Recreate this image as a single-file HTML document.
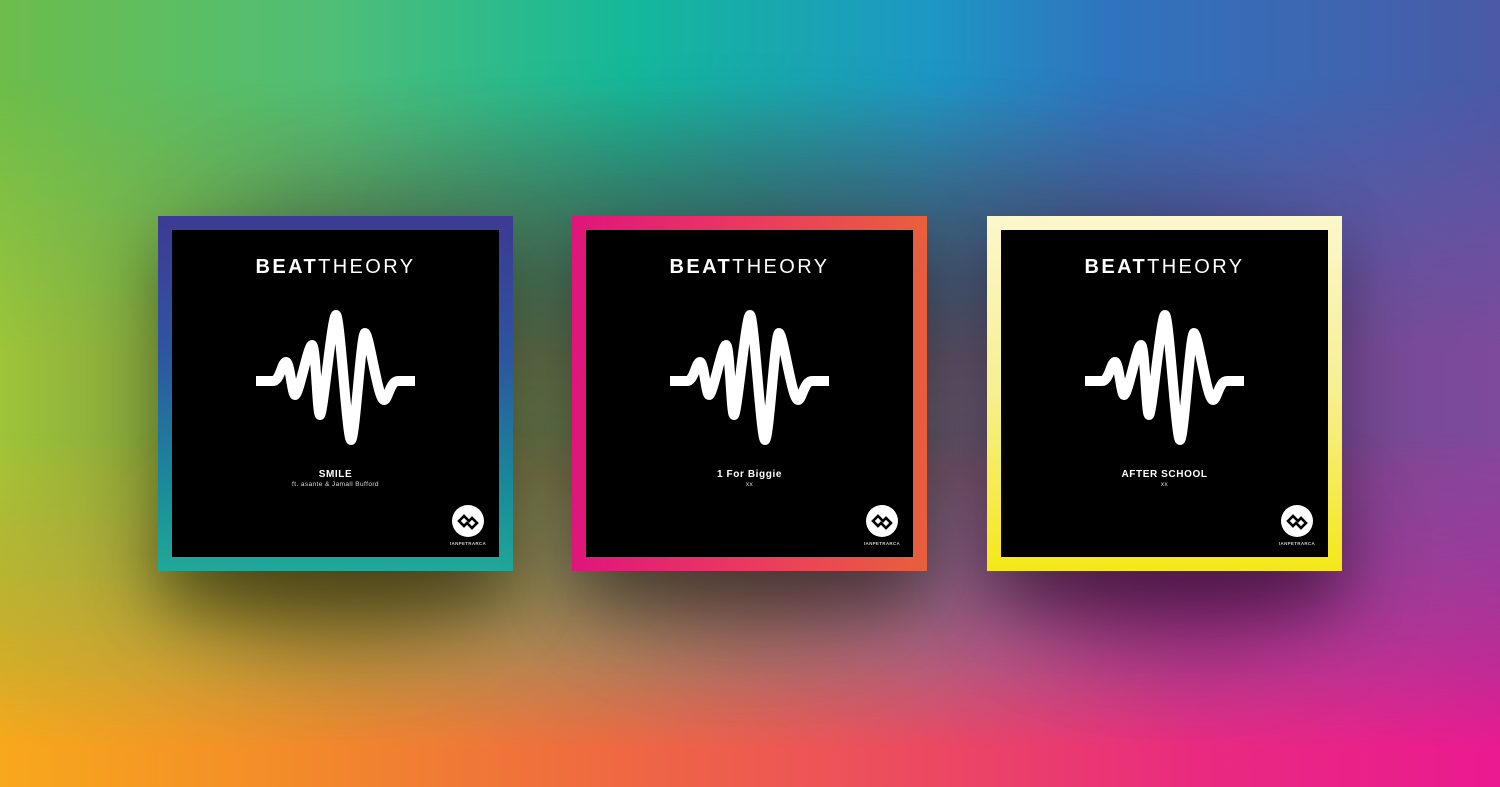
<!DOCTYPE html>
<html><head><meta charset="utf-8"><style>
*{margin:0;padding:0;box-sizing:border-box}
body{width:1500px;height:787px;overflow:hidden;position:relative;font-family:"Liberation Sans",sans-serif;background:#888}
.l{position:absolute;inset:0}
.top{background:linear-gradient(90deg,#6cbd4b 0%,#4fbe77 22%,#14b89a 42%,#1d97c4 62%,#2f74be 74%,#4a5aa6 100%)}
.mid{background:linear-gradient(90deg,#9ec43a 0%,#6f8a40 20%,#5a5e50 50%,#6c4a8a 80%,#7e4a9c 100%);-webkit-mask-image:linear-gradient(180deg,transparent 10%,#000 45%,#000 60%,transparent 85%);mask-image:linear-gradient(180deg,transparent 10%,#000 45%,#000 60%,transparent 85%)}
.bot{background:linear-gradient(90deg,#f8a81c 0%,#f28a2a 20%,#ef6a40 40%,#ec4c5e 60%,#e92a80 80%,#ea1a90 100%);-webkit-mask-image:linear-gradient(180deg,transparent 55%,#000 95%);mask-image:linear-gradient(180deg,transparent 55%,#000 95%)}
.sh{position:absolute;border-radius:50%;filter:blur(45px)}
.card{position:absolute;top:216px;width:355px;height:355px;padding:14px;box-shadow:0 30px 60px rgba(0,0,0,.35)}
.in{position:relative;width:100%;height:100%;background:#000;color:#fff;text-align:center}
.bt{position:absolute;top:26px;left:0;right:0;font-size:20px;letter-spacing:2.4px;color:#fff}
.bt b{font-weight:bold}
svg.w{position:absolute;left:-14px;top:-14px}
.t1{position:absolute;top:239px;left:0;right:0;font-size:10px;font-weight:bold;letter-spacing:.6px}
.t2{position:absolute;top:251px;left:0;right:0;font-size:6.5px;letter-spacing:.4px;color:#ddd}
.lg{position:absolute;left:280px;top:275px;width:32px;height:32px;border-radius:50%;background:#fff}
.lt{position:absolute;left:270px;top:311px;width:52px;font-size:4.5px;letter-spacing:.3px;color:#ccc;font-weight:bold}
</style></head><body>
<div class="l top"></div>
<div class="l mid"></div>
<div class="l bot"></div>
<div class="sh" style="left:170px;top:490px;width:330px;height:150px;background:rgba(60,50,0,.5)"></div>
<div class="sh" style="left:590px;top:490px;width:330px;height:140px;background:rgba(60,20,20,.35)"></div>
<div class="sh" style="left:1010px;top:490px;width:330px;height:150px;background:rgba(80,0,60,.5)"></div>
<div class="sh" style="left:200px;top:150px;width:1100px;height:200px;background:rgba(40,40,60,.25)"></div>

<div class="card" style="left:158px;background:linear-gradient(180deg,#3d3a94 0%,#2e57a0 40%,#1a8a9a 75%,#20a898 100%)"><div class="in">
<div class="bt"><b>BEAT</b>THEORY</div>
<svg class="w" width="355" height="355"><path d="M98 165 L115 165 C122 165 124 146 128 146 C132 146 134 179 137 179 C141 179 150 129 154 129 C158 129 159 199 162 199 C165 199 174 99 178 99 C182 99 189 224 193 224 C197 224 203 117 207 117 C211 117 220 184 226 184 C230 184 232 165 240 165 L257 165" fill="none" stroke="#fff" stroke-width="10" stroke-linejoin="round"/></svg>
<div class="t1">SMILE</div><div class="t2">ft. asante &amp; Jamall Bufford</div>
<div class="lg"><svg width="32" height="32"><path d="M7 16 L12 11 L17 16 L20 13 L25 18 L20 23 L15 18 L12 21 Z" fill="none" stroke="#000" stroke-width="2.6"/></svg></div><div class="lt">IANPETRARCA</div>
</div></div>

<div class="card" style="left:572px;background:linear-gradient(90deg,#e0157c 0%,#ea3a60 50%,#e8603c 100%)"><div class="in">
<div class="bt"><b>BEAT</b>THEORY</div>
<svg class="w" width="355" height="355"><path d="M98 165 L115 165 C122 165 124 146 128 146 C132 146 134 179 137 179 C141 179 150 129 154 129 C158 129 159 199 162 199 C165 199 174 99 178 99 C182 99 189 224 193 224 C197 224 203 117 207 117 C211 117 220 184 226 184 C230 184 232 165 240 165 L257 165" fill="none" stroke="#fff" stroke-width="10" stroke-linejoin="round"/></svg>
<div class="t1">1 For Biggie</div><div class="t2">xx</div>
<div class="lg"><svg width="32" height="32"><path d="M7 16 L12 11 L17 16 L20 13 L25 18 L20 23 L15 18 L12 21 Z" fill="none" stroke="#000" stroke-width="2.6"/></svg></div><div class="lt">IANPETRARCA</div>
</div></div>

<div class="card" style="left:987px;background:linear-gradient(180deg,#fcf7cc 0%,#f8ef90 50%,#f4e818 100%)"><div class="in">
<div class="bt"><b>BEAT</b>THEORY</div>
<svg class="w" width="355" height="355"><path d="M98 165 L115 165 C122 165 124 146 128 146 C132 146 134 179 137 179 C141 179 150 129 154 129 C158 129 159 199 162 199 C165 199 174 99 178 99 C182 99 189 224 193 224 C197 224 203 117 207 117 C211 117 220 184 226 184 C230 184 232 165 240 165 L257 165" fill="none" stroke="#fff" stroke-width="10" stroke-linejoin="round"/></svg>
<div class="t1">AFTER SCHOOL</div><div class="t2">xx</div>
<div class="lg"><svg width="32" height="32"><path d="M7 16 L12 11 L17 16 L20 13 L25 18 L20 23 L15 18 L12 21 Z" fill="none" stroke="#000" stroke-width="2.6"/></svg></div><div class="lt">IANPETRARCA</div>
</div></div>
</body></html>
